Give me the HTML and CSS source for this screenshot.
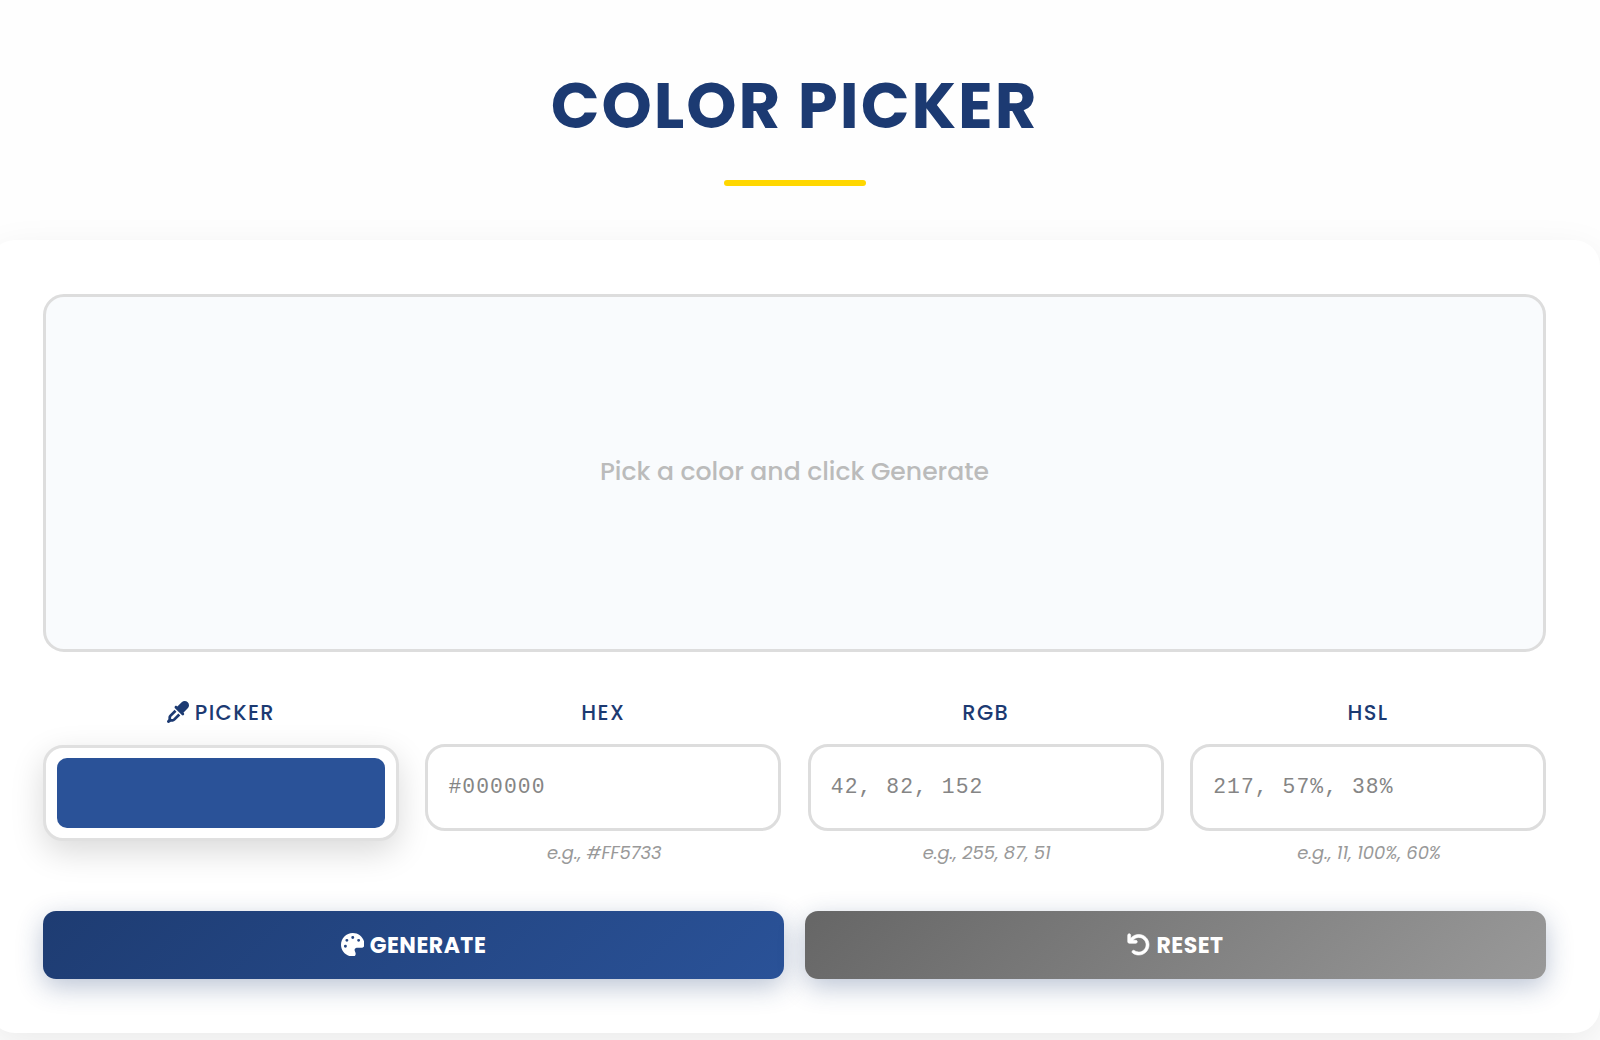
FILE: index.html
```html
<!DOCTYPE html>
<html lang="en">
<head>
    <meta charset="UTF-8">
    <meta name="viewport" content="width=device-width, initial-scale=1.0">
    <title>Color Picker</title>
    <link rel="stylesheet" href="styles.css">
</head>
<body>

<!-- Page title -->
<header class="page-header">
    <h1>COLOR PICKER</h1>
    <div class="title-line"></div>
</header>

<main class="picker-card">
    <!-- Preview -->
    <div class="color-preview">
        <span class="preview-text">Pick a color and click Generate</span>
    </div>

    <!-- Inputs -->
    <div class="inputs">
        <div class="input-group">
            <label for="colorPicker">
                <svg class="icon" viewBox="0 0 512 512"><path d="M341.6 29.2L240.1 130.8l-9.4-9.4c-12.5-12.5-32.8-12.5-45.3 0s-12.5 32.8 0 45.3l160 160c12.5 12.5 32.8 12.5 45.3 0s12.5-32.8 0-45.3l-9.4-9.4L482.8 170.4c39-39 39-102.2 0-141.1s-102.2-39-141.1 0zM55.4 323.3c-15 15-23.4 35.4-23.4 56.6v42.4L5.4 462.2c-8.5 12.7-6.8 29.6 4 40.4s27.7 12.5 40.4 4L89.7 480h42.4c21.2 0 41.6-8.4 56.6-23.4L309.4 335.9l-45.3-45.3L143.4 411.3c-3 3-7.1 4.7-11.3 4.7H96V379.9c0-4.2 1.7-8.3 4.7-11.3L221.4 247.9l-45.3-45.3L55.4 323.3z"/></svg>
                <span>PICKER</span>
            </label>
            <input type="color" id="colorPicker" class="color-input" value="#2a5298">
        </div>
        <div class="input-group">
            <label for="hexInput">HEX</label>
            <input type="text" id="hexInput" class="text-input" placeholder="#000000">
            <small>e.g., #FF5733</small>
        </div>
        <div class="input-group">
            <label for="rgbInput">RGB</label>
            <input type="text" id="rgbInput" class="text-input" placeholder="42, 82, 152">
            <small>e.g., 255, 87, 51</small>
        </div>
        <div class="input-group">
            <label for="hslInput">HSL</label>
            <input type="text" id="hslInput" class="text-input" placeholder="217, 57%, 38%">
            <small>e.g., 11, 100%, 60%</small>
        </div>
    </div>

    <!-- Buttons -->
    <div class="buttons">
        <button type="button" class="btn btn-generate">
            <svg class="icon" viewBox="0 0 512 512"><path d="M512 256c0 .9 0 1.8 0 2.7c-.4 36.5-33.6 61.3-70.1 61.3H344c-26.5 0-48 21.5-48 48c0 3.4 .4 6.7 1 9.9c2.1 10.2 6.5 20 10.8 29.9c6.1 13.8 12.1 27.5 12.1 42c0 31.8-21.6 60.7-53.4 62c-3.5 .1-7 .2-10.6 .2C114.6 512 0 397.4 0 256S114.6 0 256 0S512 114.6 512 256zM128 288a32 32 0 1 0 -64 0 32 32 0 1 0 64 0zm0-96a32 32 0 1 0 0-64 32 32 0 1 0 0 64zM288 96a32 32 0 1 0 -64 0 32 32 0 1 0 64 0zm96 96a32 32 0 1 0 0-64 32 32 0 1 0 0 64z"/></svg>
            <span>GENERATE</span>
        </button>
        <button type="button" class="btn btn-reset">
            <svg class="icon icon-undo" viewBox="0 0 512 512"><path d="M480 256c0 123.4-100.5 223.9-223.9 223.9c-48.86 0-95.19-15.58-134.2-44.86c-14.14-10.59-17-30.66-6.391-44.81c10.61-14.09 30.69-16.97 44.8-6.375c27.84 20.91 61 31.94 95.89 31.94C344.3 415.8 416 344.1 416 256s-71.67-159.8-159.8-159.8C205.9 96.19 158.6 120.3 128.6 160H192c17.67 0 32 14.31 32 32S209.7 224 192 224H48c-17.67 0-32-14.31-32-32V48c0-17.69 14.33-32 32-32s32 14.31 32 32v70.23C122.1 64.58 186.1 32.11 256.1 32.11C379.5 32.11 480 132.6 480 256z"/></svg>
            <span>RESET</span>
        </button>
    </div>
</main>

</body>
</html>
```

FILE: styles.css
```css
* {
    margin: 0;
    padding: 0;
    box-sizing: border-box;
}

body {
    font-family: 'Poppins', 'Inter', sans-serif;
    background-color: #fefefe;
    height: 1040px;
    overflow: hidden;
}

/* Title */
.page-header {
    display: flex;
    flex-direction: column;
    align-items: center;
    height: 240px;
    margin-right: 11px;
    padding-top: 65px;
}

.page-header h1 {
    font-size: 64px;
    font-weight: 700;
    line-height: 81px;
    letter-spacing: 2px;
    color: #1c3a72;
}

.title-line {
    width: 142px;
    height: 6px;
    margin-top: 34px;
    background: #ffd700;
    border-radius: 3px;
}

/* Card */
.picker-card {
    width: 1611px;
    height: 793px;
    margin-left: -11px;
    padding: 54px;
    background: #fff;
    border-radius: 26px;
    box-shadow: 0 13px 40px rgba(0, 0, 0, 0.08);
}

.color-preview {
    display: flex;
    align-items: center;
    justify-content: center;
    height: 358px;
    padding-bottom: 3px;
    background: #f9fbfd;
    border: 3px solid #ddd;
    border-radius: 21px;
}

.preview-text {
    font-size: 25.1px;
    font-weight: 500;
    color: #bbb;
}

/* Inputs */
.inputs {
    display: grid;
    grid-template-columns: repeat(4, 1fr);
    gap: 26.6px;
    margin-top: 44px;
}

.input-group {
    display: flex;
    flex-direction: column;
    align-items: center;
    height: 171px;
}

.input-group label {
    display: flex;
    align-items: center;
    gap: 6px;
    height: 32px;
    margin-bottom: 16px;
    font-size: 21px;
    font-weight: 500;
    letter-spacing: 1.4px;
    color: #1c3a72;
}

.icon {
    flex-shrink: 0;
    width: 22px;
    height: 22px;
    fill: currentColor;
}

.color-input {
    width: 100%;
    height: 96px;
    margin-top: 1px;
    padding: 10px 11px;
    background: #fff;
    border: 3px solid #e0e0e0;
    border-radius: 20px;
    box-shadow: 0 11px 33px rgba(0, 0, 0, 0.15);
    cursor: pointer;
}

.color-input::-webkit-color-swatch-wrapper {
    padding: 0;
}

.color-input::-webkit-color-swatch {
    border: none;
    border-radius: 10px;
}

.text-input {
    width: 100%;
    height: 87px;
    padding: 0 20px 1px;
    font-family: 'Courier New', 'Liberation Mono', monospace;
    font-size: 21.3px;
    letter-spacing: 1.1px;
    background: #fff;
    border: 3px solid #ddd;
    border-radius: 20px;
}

.text-input::placeholder {
    color: #858585;
}

.input-group small {
    margin-top: 10px;
    padding-left: 2px;
    font-size: 17.9px;
    font-style: italic;
    line-height: 24px;
    color: #999;
}

/* Buttons */
.buttons {
    display: grid;
    grid-template-columns: 1fr 1fr;
    gap: 21px;
    margin-top: 44px;
}

.btn {
    display: flex;
    align-items: center;
    justify-content: center;
    gap: 5.5px;
    height: 68px;
    font-family: inherit;
    font-size: 22px;
    font-weight: 700;
    letter-spacing: 0.5px;
    color: #fff;
    border: none;
    border-radius: 13px;
    box-shadow: 0 8px 27px rgba(30, 60, 114, 0.3);
    cursor: pointer;
}

.btn .icon {
    width: 23.5px;
    height: 23.5px;
    margin-bottom: 1px;
}

.btn-generate {
    background: linear-gradient(135deg, #1e3c72, #2a5298);
}

.btn-reset {
    background: linear-gradient(135deg, #666, #999);
}

.icon-undo {
    stroke: currentColor;
    stroke-width: 14;
}
```
